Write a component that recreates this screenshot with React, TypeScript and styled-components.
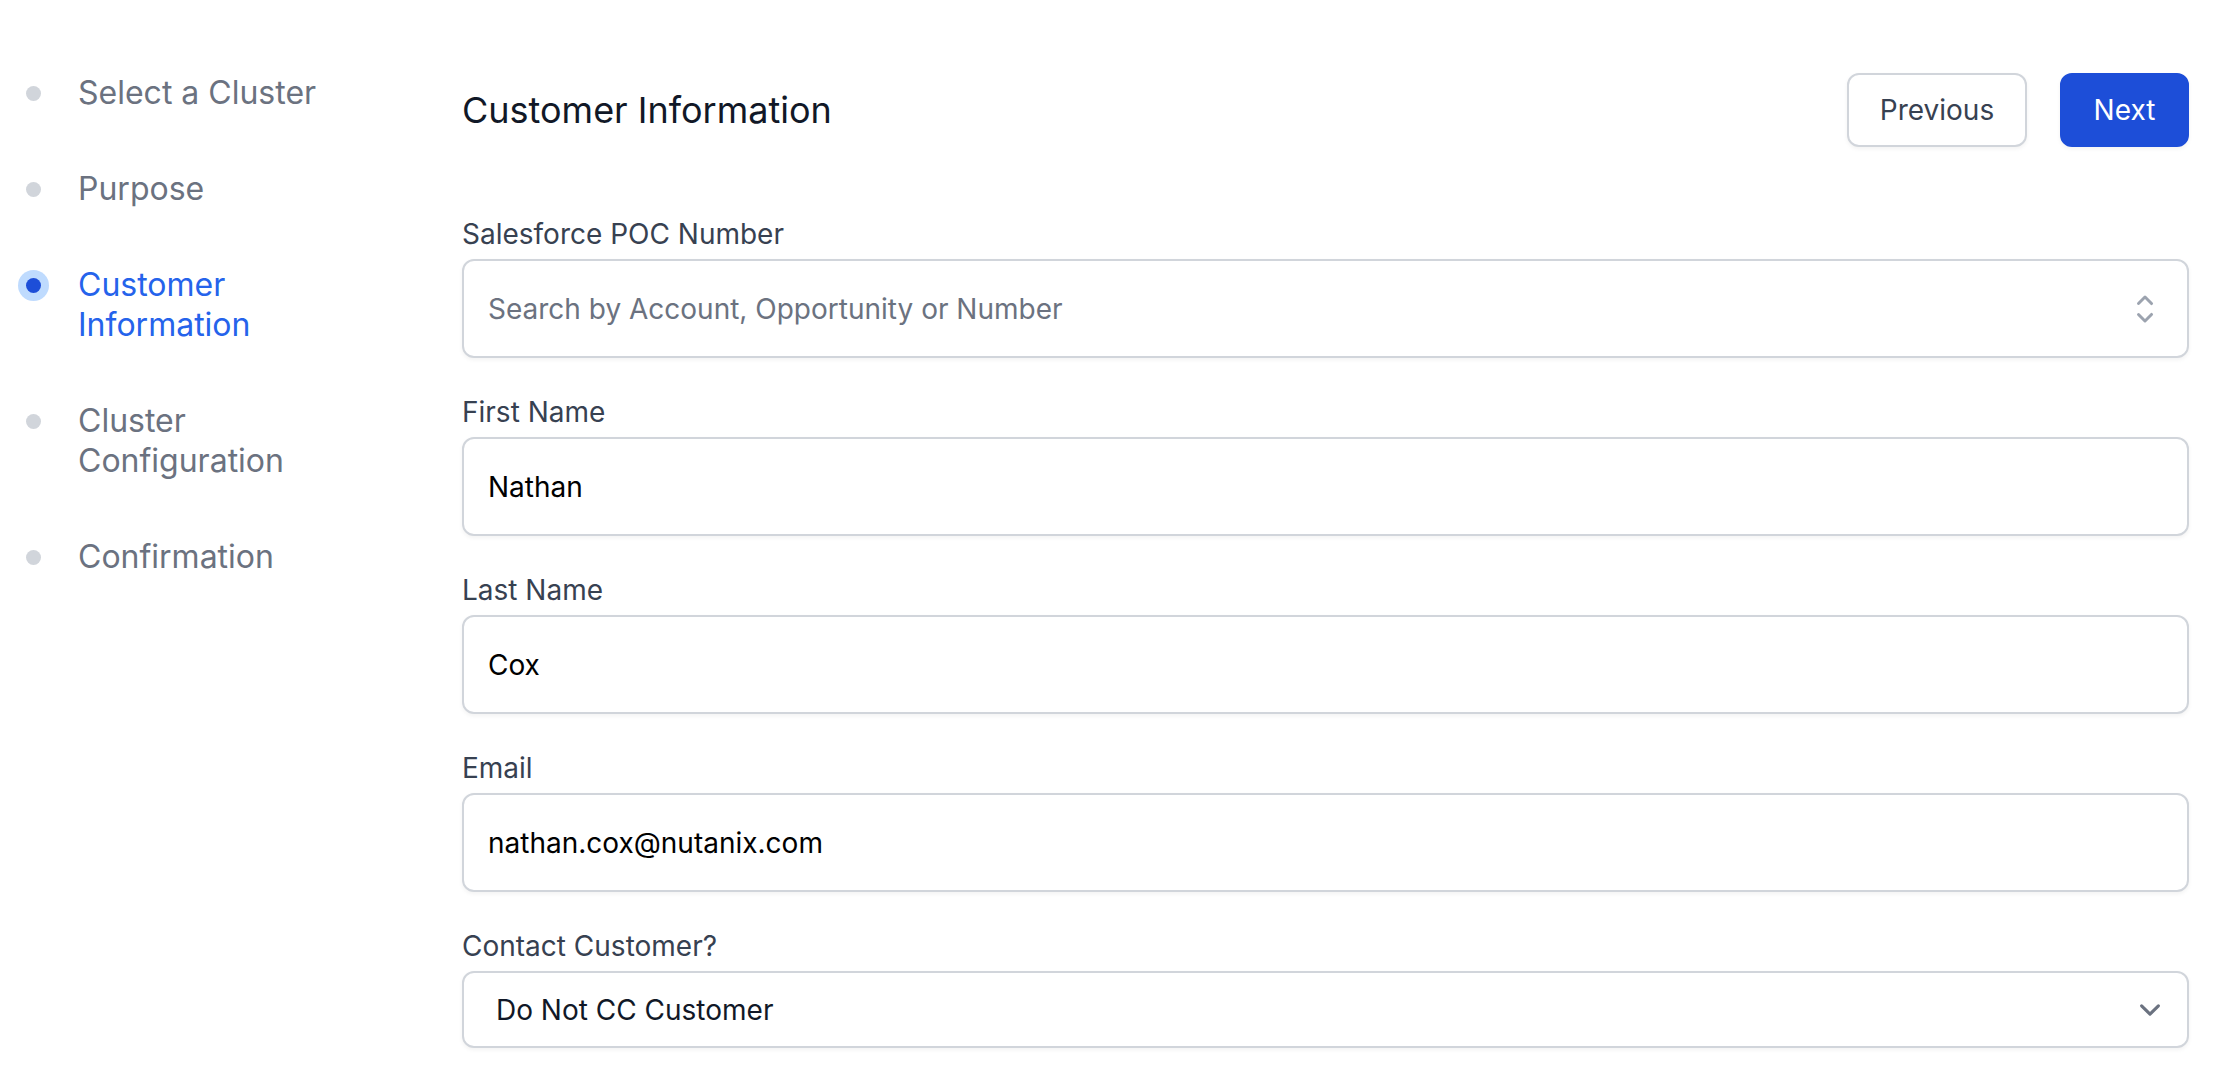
import React from 'react';
import styled, {createGlobalStyle} from 'styled-components';

const GlobalStyle = createGlobalStyle`
  html, body {
    margin: 0;
    padding: 0;
    background: #ffffff;
    font-family: Inter, "Noto Sans", "Liberation Sans", sans-serif;
    -webkit-font-smoothing: antialiased;
  }
  * {
    box-sizing: border-box;
  }
`;

const Page = styled.div`
  display: flex;
  min-height: 1084px;
  background: #ffffff;
`;

const Steps = styled.nav`
  width: 462px;
  flex-shrink: 0;
  padding: 73px 0 0 17px;
  display: flex;
  flex-direction: column;
  gap: 56px;
`;

const Step = styled.div<{$active?: boolean}>`
  display: flex;
  align-items: flex-start;
  gap: 29px;
  font-size: 32px;
  line-height: 40px;
  color: ${p => (p.$active ? '#2563eb' : '#6b7280')};
`;

const DotWrap = styled.span`
  width: 32px;
  height: 40px;
  flex-shrink: 0;
  display: flex;
  align-items: center;
  justify-content: center;
`;

const Dot = styled.span<{$active?: boolean}>`
  width: 15px;
  height: 15px;
  border-radius: 50%;
  background: ${p => (p.$active ? '#1d4ed8' : '#d1d5db')};
  box-shadow: ${p => (p.$active ? '0 0 0 8px #bfdbfe' : 'none')};
`;

const StepLabel = styled.span`
  max-width: 240px;
`;

const Main = styled.main`
  flex: 1;
  padding: 73px 51px 0 0;
`;

const Header = styled.div`
  display: flex;
  align-items: center;
  justify-content: space-between;
  height: 74px;
`;

const Title = styled.h1`
  margin: 0;
  font-size: 36px;
  line-height: 56px;
  font-weight: 400;
  color: #111827;
`;

const Actions = styled.div`
  display: flex;
  gap: 33px;
`;

const Button = styled.button<{$primary?: boolean}>`
  height: 74px;
  width: ${p => (p.$primary ? '129px' : '180px')};
  border-radius: 12px;
  border: 2px solid ${p => (p.$primary ? '#1d4ed8' : '#d1d5db')};
  background: ${p => (p.$primary ? '#1d4ed8' : '#ffffff')};
  color: ${p => (p.$primary ? '#ffffff' : '#374151')};
  font-family: inherit;
  font-size: 28px;
  font-weight: 400;
  box-shadow: 0 2px 4px rgba(0, 0, 0, 0.05);
  cursor: pointer;
`;

const Form = styled.form`
  margin-top: 67px;
  display: flex;
  flex-direction: column;
  gap: 34px;
`;

const Field = styled.div`
  display: flex;
  flex-direction: column;
  gap: 5px;
`;

const Label = styled.label`
  font-size: 28px;
  line-height: 40px;
  color: #374151;
`;

const Box = styled.div<{$select?: boolean}>`
  display: flex;
  align-items: center;
  height: ${p => (p.$select ? '77px' : '99px')};
  padding: ${p => (p.$select ? '0 16px 0 32px' : '0 22px 0 24px')};
  border: 2px solid #d1d5db;
  border-radius: 12px;
  background: #ffffff;
  box-shadow: 0 2px 4px rgba(0, 0, 0, 0.05);
`;

const Input = styled.input`
  flex: 1;
  min-width: 0;
  border: none;
  outline: none;
  padding: 0;
  background: transparent;
  font-family: inherit;
  font-size: 28px;
  line-height: 40px;
  color: #000000;

  &::placeholder {
    color: #6b7280;
  }
`;

const Value = styled.span`
  flex: 1;
  font-size: 28px;
  line-height: 40px;
  color: #111827;
`;

const ChevronUpDown = () => (
  <svg width="40" height="40" viewBox="0 0 20 20" fill="#9ca3af" aria-hidden="true">
    <path
      fillRule="evenodd"
      d="M10.53 3.47a.75.75 0 0 0-1.06 0L6.22 6.72a.75.75 0 0 0 1.06 1.06L10 5.06l2.72 2.72a.75.75 0 1 0 1.06-1.06l-3.25-3.25Zm-4.310 9.81 3.25 3.25a.75.75 0 0 0 1.06 0l3.250-3.25a.75.75 0 1 0-1.06-1.06L10 14.94l-2.72-2.720a.75.75 0 0 0-1.06 1.06Z"
      clipRule="evenodd"
    />
  </svg>
);

const ChevronDown = () => (
  <svg width="42" height="42" viewBox="0 0 20 20" fill="none" aria-hidden="true">
    <path d="M6 8l4 4 4-4" stroke="#6b7280" strokeWidth="1.5" strokeLinecap="round" strokeLinejoin="round" />
  </svg>
);

const steps = [
  {label: 'Select a Cluster'},
  {label: 'Purpose'},
  {label: 'Customer Information', active: true},
  {label: 'Cluster Configuration'},
  {label: 'Confirmation'},
];

const fields = [
  {label: 'First Name', value: 'Nathan'},
  {label: 'Last Name', value: 'Cox'},
  {label: 'Email', value: 'nathan.cox@nutanix.com'},
];

const App = () => {
  return (
    <>
      <GlobalStyle />
      <Page>
        <Steps>
          {steps.map(s => (
            <Step key={s.label} $active={s.active}>
              <DotWrap>
                <Dot $active={s.active} />
              </DotWrap>
              <StepLabel>{s.label}</StepLabel>
            </Step>
          ))}
        </Steps>
        <Main>
          <Header>
            <Title>Customer Information</Title>
            <Actions>
              <Button type="button">Previous</Button>
              <Button type="button" $primary>Next</Button>
            </Actions>
          </Header>
          <Form onSubmit={e => e.preventDefault()}>
            <Field>
              <Label>Salesforce POC Number</Label>
              <Box>
                <Input placeholder="Search by Account, Opportunity or Number" />
                <ChevronUpDown />
              </Box>
            </Field>
            {fields.map(f => (
              <Field key={f.label}>
                <Label>{f.label}</Label>
                <Box>
                  <Input defaultValue={f.value} />
                </Box>
              </Field>
            ))}
            <Field>
              <Label>Contact Customer?</Label>
              <Box $select>
                <Value>Do Not CC Customer</Value>
                <ChevronDown />
              </Box>
            </Field>
          </Form>
        </Main>
      </Page>
    </>
  );
};

export default App;
